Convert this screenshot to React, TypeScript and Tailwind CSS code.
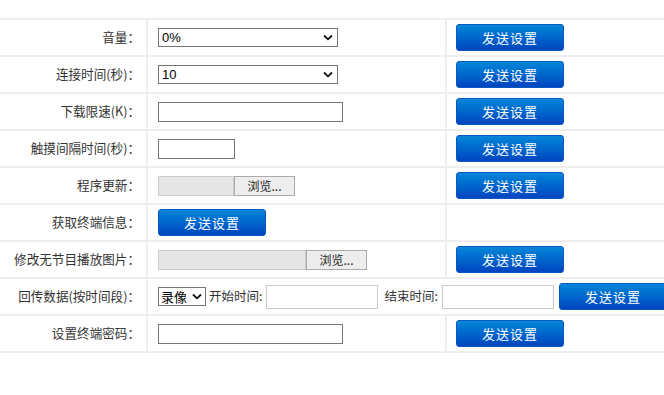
import React from "react";

const font = "font-['Microsoft_YaHei','Noto_Sans_CJK_SC',sans-serif]";

function Btn() {
  return (
    <button className="w-[108px] h-[27px] shrink-0 rounded-[3px] bg-gradient-to-b from-[#0b86d8] to-[#0044c0] border border-[#0758c0] text-white text-[13px] leading-none font-['Noto_Sans_CJK_SC',sans-serif] tracking-[1px]">
      发送设置
    </button>
  );
}

function Chevron() {
  return (
    <svg width="10" height="7" viewBox="0 0 10 7" className="shrink-0">
      <path d="M1 1.5 L5 5.3 L9 1.5" fill="none" stroke="#111" strokeWidth="1.8" />
    </svg>
  );
}

function Select({ value, w }: { value: string; w: string }) {
  return (
    <div className={`${w} h-[19px] border border-[#767676] bg-white flex items-center justify-between pl-[3px] pr-[4px] text-[13px] text-black font-['Liberation_Sans','Noto_Sans_CJK_SC',sans-serif]`}>
      <span>{value}</span>
      <Chevron />
    </div>
  );
}

function TextInput({ w }: { w: string }) {
  return <div className={`${w} h-[20px] border border-[#767676] bg-white`} />;
}

function FileInput({ w }: { w: string }) {
  return (
    <div className="flex h-[20px]">
      <div className={`${w} h-full bg-[#e6e6e6] border border-[#cccccc]`} />
      <div className="w-[61px] h-full bg-[#ededed] border border-[#ababab] flex items-center justify-center text-[12px] text-[#222] font-['Noto_Sans_CJK_SC',sans-serif]">
        浏览...
      </div>
    </div>
  );
}

function Label({ children }: { children: React.ReactNode }) {
  return (
    <div className={`bg-white h-[35px] flex items-center justify-end pr-[6px] text-[12.6px] text-[#333] ${font}`}>
      {children}
    </div>
  );
}

function Cell({ children, span }: { children?: React.ReactNode; span?: boolean }) {
  return (
    <div className={`bg-white h-[35px] flex items-center pl-[10px] ${span ? "col-span-2" : ""}`}>{children}</div>
  );
}

function BtnCell() {
  return (
    <div className="bg-white h-[35px] flex items-center pl-[9px]">
      <Btn />
    </div>
  );
}

export default function App() {
  return (
    <div className="w-[664px] h-[395px] overflow-hidden bg-white">
      <div className="mt-[18px] w-[760px] grid grid-cols-[146px_297px_1fr] gap-[2px] bg-[#eeeeee] py-[2px]">
        <Label>音量：</Label>
        <Cell>
          <Select value="0%" w="w-[180px]" />
        </Cell>
        <BtnCell />

        <Label>连接时间(秒)：</Label>
        <Cell>
          <Select value="10" w="w-[180px]" />
        </Cell>
        <BtnCell />

        <Label>下载限速(K)：</Label>
        <Cell>
          <TextInput w="w-[185px]" />
        </Cell>
        <BtnCell />

        <Label>触摸间隔时间(秒)：</Label>
        <Cell>
          <TextInput w="w-[77px]" />
        </Cell>
        <BtnCell />

        <Label>程序更新：</Label>
        <Cell>
          <FileInput w="w-[76px]" />
        </Cell>
        <BtnCell />

        <Label>获取终端信息：</Label>
        <Cell>
          <Btn />
        </Cell>
        <div className="bg-white h-[35px]" />

        <Label>修改无节目播放图片：</Label>
        <Cell>
          <FileInput w="w-[148px]" />
        </Cell>
        <BtnCell />

        <Label>回传数据(按时间段)：</Label>
        <Cell span>
          <div className={`flex items-center text-[12.5px] text-[#333] ${font}`}>
            <div className="w-[48px] h-[19px] border border-[#767676] bg-white flex items-center justify-between pl-[2px] pr-[3px] text-[13px] text-black font-['Noto_Sans_CJK_SC',sans-serif]">
              <span>录像</span>
              <Chevron />
            </div>
            <span className="ml-[3px]">开始时间:</span>
            <div className="ml-[4px] w-[112px] h-[24px] border border-[#cccccc] bg-white" />
            <span className="ml-[6px]">结束时间:</span>
            <div className="ml-[4px] w-[112px] h-[24px] border border-[#cccccc] bg-white" />
            <div className="ml-[5px]">
              <Btn />
            </div>
          </div>
        </Cell>

        <Label>设置终端密码：</Label>
        <Cell>
          <TextInput w="w-[185px]" />
        </Cell>
        <BtnCell />
      </div>
    </div>
  );
}
